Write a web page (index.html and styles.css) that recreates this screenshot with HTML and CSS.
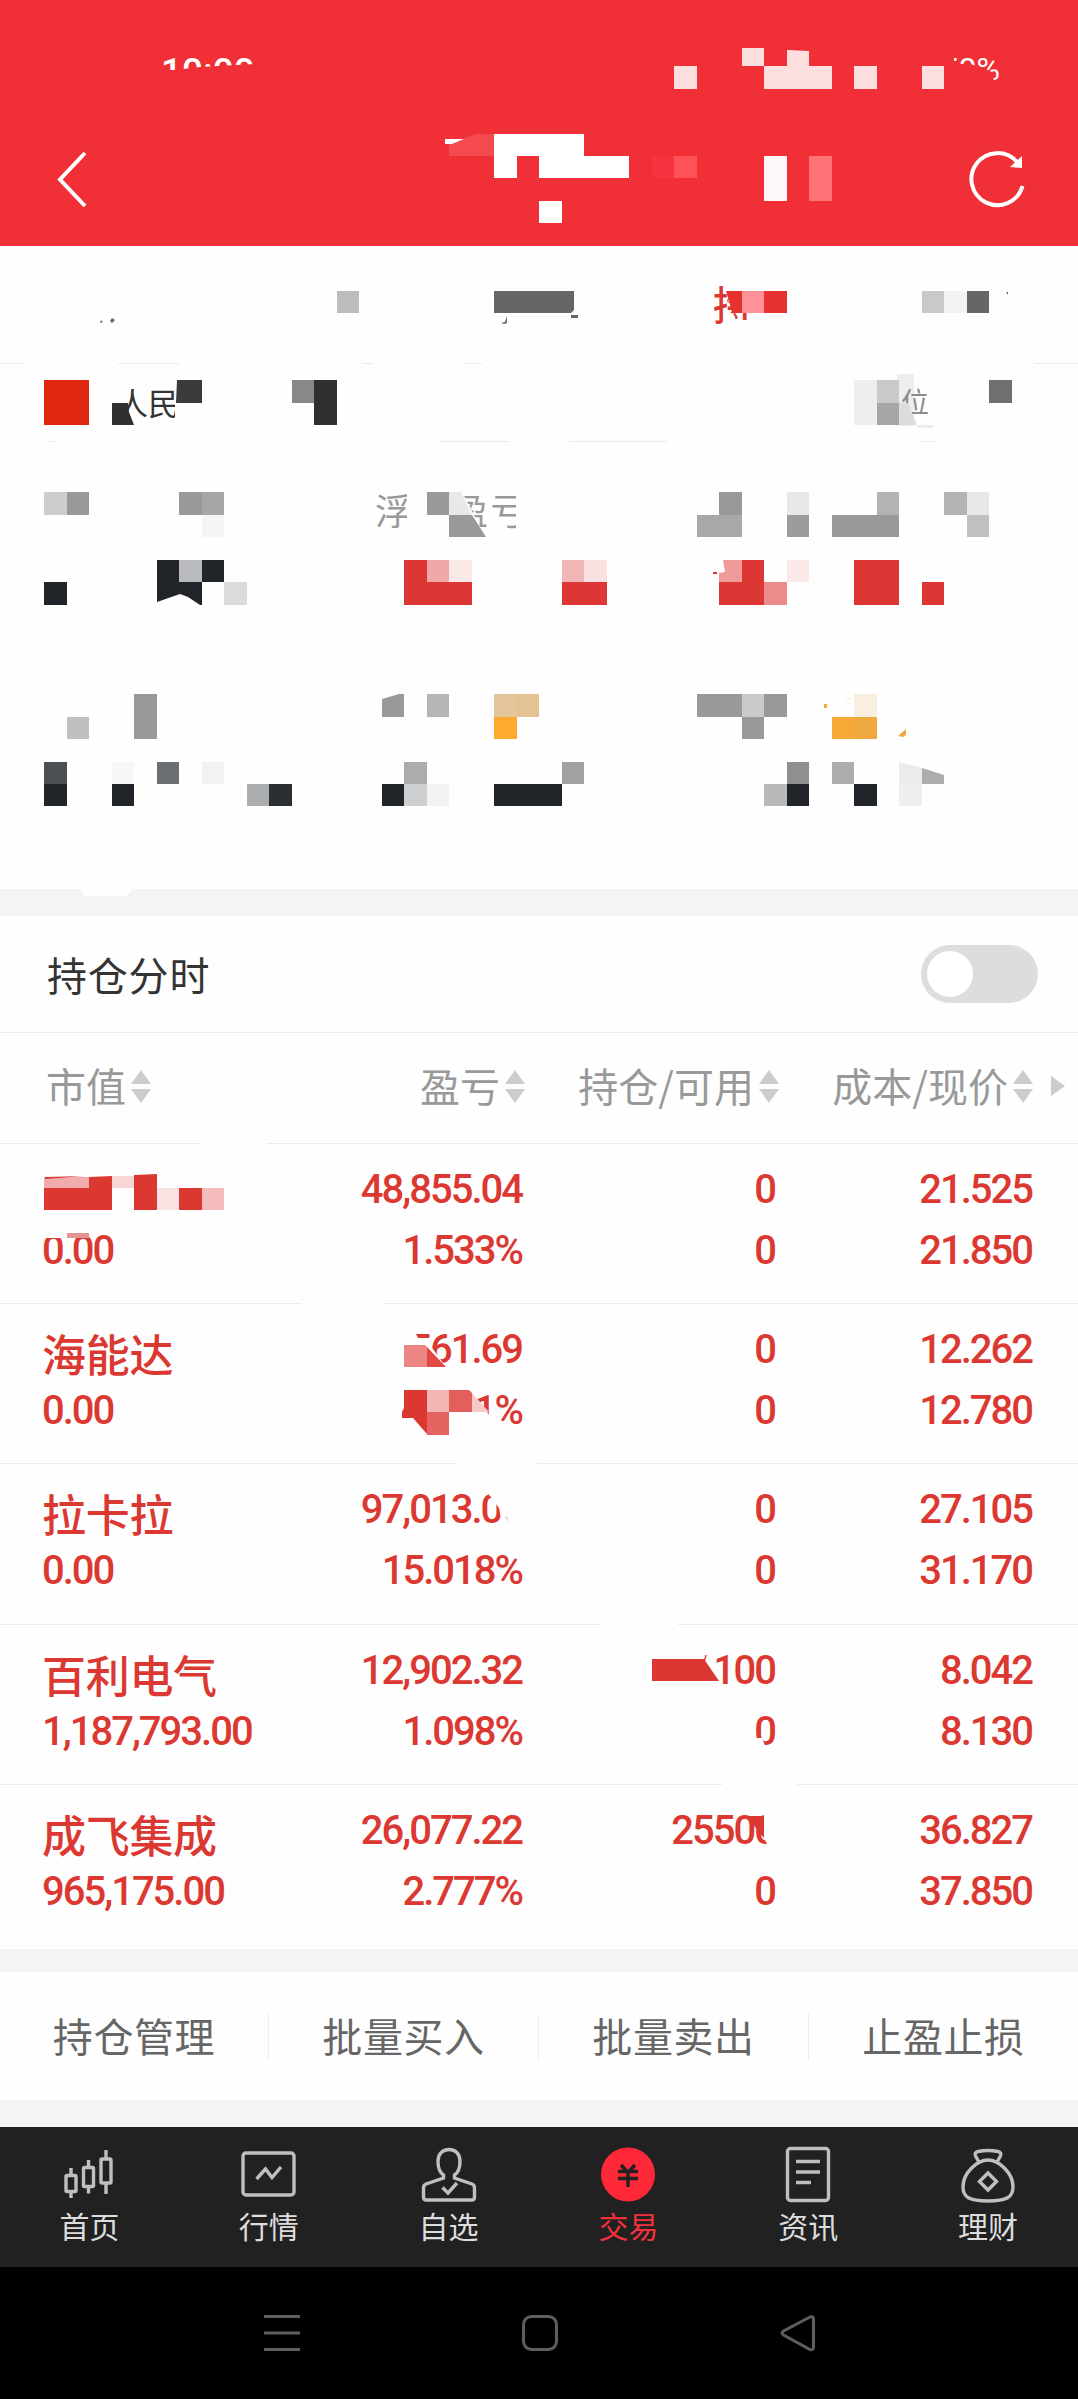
FILE: index.html
```html
<!DOCTYPE html>
<html lang="zh-CN">
<head>
    <meta charset="UTF-8">
    <meta name="viewport" content="width=device-width, initial-scale=1.0">
    <title>持仓</title>
    <link rel="stylesheet" href="styles.css">
</head>

<body>
    <header class="header">
        <div class="status-bar">
            <span class="clock">10:00</span>
            <span class="battery">50%</span>
        </div>
        <div class="title-bar">
            <svg class="back" width="32" height="60" viewBox="0 0 32 60"><path d="M29 3 4 29.500 29 56"/></svg>
            <svg class="refresh" width="60" height="60" viewBox="0 0 60 60">
                <path d="M55.500 36A26 26 0 1 1 50 12"/>
                <path class="head" d="M43 17 55 18V6z"/>
            </svg>
        </div>
        <svg class="mosaic" viewBox="0 0 1078 246">
            <path fill="#f12f37" d="M160 70 175 70 200 67 255 64V92H160zM938 50h16v14h16l14 4 8 4 4 18H938z"/>
            <path fill="#fedfe0" d="M674 66h23v23h-23zM742 48h22v18h-22zM787 50l22 1v15h-22zM764 66h68v23h-68zM854 66h23v23h-23zM922 66h22v23h-22z"/>
            <path fill="#f4494f" d="M449 144 476 134H494V156H449z"/>
            <path fill="#fff" d="M445 139h19l-12 5h-7zM494 134h90v22h45v22h-90v-22h-22v22h-23zM539 201h23v22h-23z"/>
            <path fill="#f73340" d="M652 156h22v22h-22z"/>
            <path fill="#ff5258" d="M674 156h23v22h-23z"/>
            <path fill="#fff8f8" d="M764 156h23v45h-23z"/>
            <path fill="#ff7276" d="M809 156h23v45h-23z"/>
        </svg>
    </header>

    <section class="summary">
        <div class="tabs"><span class="active">持</span></div>
        <div class="account">
            <span class="market">人民</span>
            <span class="unit">位</span>
        </div>
        <div class="metrics"><span>浮动盈亏</span></div>
        <svg class="mosaic" viewBox="0 246 1078 643">
            <!-- gaps -->
            <path fill="#fefefe" d="M25 362h93v3h-93zM179 362h183v3h-183zM373 362h90v3h-90zM482 362h431v3h-431zM915 362h119v3h-119zM0 440h46v3h-46zM55 440h384v3h-384zM509 440h60v3h-60zM668 440h253v3h-253zM935 440h143v3h-143z"/>
            <path fill="#fefefe" d="M726 280h40v11h-40zM731 313h40v20h-33zM728 300l8 20h14v-20zM112 375h14v40h-14zM175 403h30v24h-30zM407 488h42v52h-42zM449 488h11l26 50h-37zM516 488h20v52h-20zM488 518h18v20h-18z"/>
            <!-- tabs -->
            <path fill="#bdbdbd" d="M337 291h22v22h-22z"/>
            <path fill="#666" d="M494 291h80v19l-3 3h-77zM571 315h7v3h-7zM501 323l4-1 2-6v7l-3 1zM967 291h22v22h-22zM1006 292h2v3zM101 320l2 2-3 1zM112 318l3 2-3 3-2-2z"/>
            <path fill="#e53230" d="M726 291h16v22h-10l-3-12zM764 291h23v22h-23z"/>
            <path fill="#ff9298" d="M742 291h22v22h-22z"/>
            <path fill="#c9c9c9" d="M922 291h22v22h-22zM877 380h22v23h-22z"/>
            <path fill="#f3f3f3" d="M944 291h23v22h-23z"/>
            <!-- account -->
            <path fill="#df2710" d="M44 380h45v45h-45z"/>
            <path fill="#303030" d="M112 403h16l1 9 5 13h-22zM314 380h23v45h-23z"/>
            <path fill="#3b3b3b" d="M177 380h25v23h-26z"/>
            <path fill="#888" d="M292 380h22v23h-22z"/>
            <path fill="#eeeef0" d="M854 380h23v45h-23zM917 425h16v3h-16z"/>
            <path fill="#a6a6a6" d="M877 403h22v22h-22zM202 492h22v23h-22z"/>
            <path fill="#ddd" d="M899 403h9l9 22h-18z"/>
            <path fill="#707072" d="M989 380h23v23h-23z"/>
            <!-- first metrics row -->
            <path fill="#cdcdcd" d="M44 492h23v23h-23z"/>
            <path fill="#999" d="M67 492h22v23h-22zM179 492h23v23h-23zM427 492h22v23h-22zM449 515h23l14 22h-37zM719 492h23v23h-23zM832 515h67v22h-67z"/>
            <path fill="#f5f5f5" d="M202 515h22v22h-22z"/>
            <path fill="#e8e8e8" d="M449 492h12l11 23h-23zM787 492h22v23h-22zM967 492h22v23h-22z"/>
            <path fill="#a8a8a8" d="M697 515h45v22h-45z"/>
            <path fill="#9c9c9c" d="M787 515h22v22h-22z"/>
            <path fill="#b3b3b3" d="M877 492h22v23h-22zM944 492h23v23h-23z"/>
            <path fill="#c0c0c0" d="M967 515h22v22h-22z"/>
            <path fill="#212428" d="M44 582h23v23h-23zM157 560h45v45h-2l-12-8-8-3-23 8zM202 560h22v22h-22z"/>
            <path fill="#b8babc" d="M179 560h23v22h-23z"/>
            <path fill="#dadbdd" d="M224 582h23v23h-23z"/>
            <path fill="#dc3734" d="M404 560h23v22h45v23h-68zM562 582h45v23h-45zM742 560h22v45h-45v-23h23zM854 560h45v45h-45zM922 582h22v23h-22zM713 572h4v2h-4z"/>
            <path fill="#efa7a7" d="M427 560h22v22h-22z"/>
            <path fill="#fae9e8" d="M449 560h23v22h-23zM787 560h22v22h-22z"/>
            <path fill="#f2b5b5" d="M562 560h22v22h-22z"/>
            <path fill="#fae1e1" d="M584 560h23v22h-23z"/>
            <path fill="#ee9b99" d="M723 560h19v22h-23v-9l6-1z"/>
            <path fill="#eb8c8a" d="M764 582h23v23h-23z"/>
            <!-- second metrics row -->
            <path fill="#bfbfbf" d="M67 717h22v22h-22z"/>
            <path fill="#999" d="M134 694h23v45h-23zM382 699l17-5h5v23h-22zM697 694h45v23h-45zM764 694h23v23h-23zM742 717h22v22h-22z"/>
            <path fill="#b5b5b5" d="M427 694h22v23h-22z"/>
            <path fill="#cacaca" d="M742 694h22v23h-22z"/>
            <path fill="#e2c69a" d="M494 694h23v23h-23z"/>
            <path fill="#e4c291" d="M517 694h22v23h-22z"/>
            <path fill="#fcab2d" d="M494 717h23v22h-23z"/>
            <path fill="#f8efe0" d="M854 694h23v23h-23z"/>
            <path fill="#f6a934" d="M832 717h22v22h-22z"/>
            <path fill="#f0a83e" d="M854 717h23v22h-23zM824 704h3v4h-3zM898 736l8-7v6l-3 2z"/>
            <path fill="#f8dcae" d="M844 699l6-1v1z"/>
            <path fill="#4c5052" d="M44 762h23v22h-23z"/>
            <path fill="#212428" d="M44 784h23v22h-23zM112 784h22v22h-22zM382 784h22v22h-22zM494 784h68v22h-68zM787 784h22v22h-22zM854 784h23v22h-23z"/>
            <path fill="#f7f7f7" d="M112 762h22v22h-22z"/>
            <path fill="#6a6d71" d="M157 762h22v22h-22z"/>
            <path fill="#f2f2f2" d="M202 762h22v22h-22zM427 784h22v22h-22z"/>
            <path fill="#2b2e33" d="M269 784h23v22h-23z"/>
            <path fill="#abacae" d="M247 784h22v22h-22zM404 762h23v22h-23zM832 762h22v22h-22zM922 768l22 7v9h-22z"/>
            <path fill="#cecfd0" d="M404 784h23v22h-23z"/>
            <path fill="#a0a1a3" d="M562 762h22v22h-22z"/>
            <path fill="#8e8f91" d="M787 762h22v22h-22z"/>
            <path fill="#b8b9bb" d="M764 784h23v22h-23z"/>
            <path fill="#ebebeb" d="M899 762l23 6v16h-23z"/>
            <path fill="#eef0f0" d="M899 784h23v22h-23z"/>
            <path fill="#fefefe" d="M80 889h52l-5 7H85z"/>
        </svg>
    </section>

    <section class="timeshare">
        <span>持仓分时</span>
        <span class="switch"></span>
    </section>

    <section class="holdings">
        <div class="row head">
            <div class="c1">市值<i class="sort"></i></div>
            <div class="c2">盈亏<i class="sort"></i></div>
            <div class="c3">持仓/可用<i class="sort"></i></div>
            <div class="c4">成本/现价<i class="sort"></i></div>
            <i class="more"></i>
        </div>
        <div class="row">
            <div class="c1"><b></b><span>0.00</span></div>
            <div class="c2"><span>48,855.04</span><span>1.533%</span></div>
            <div class="c3"><span>0</span><span>0</span></div>
            <div class="c4"><span>21.525</span><span>21.850</span></div>
        </div>
        <div class="row">
            <div class="c1"><b>海能达</b><span>0.00</span></div>
            <div class="c2"><span>561.69</span><span>4.11%</span></div>
            <div class="c3"><span>0</span><span>0</span></div>
            <div class="c4"><span>12.262</span><span>12.780</span></div>
        </div>
        <div class="row">
            <div class="c1"><b>拉卡拉</b><span>0.00</span></div>
            <div class="c2"><span>97,013.06</span><span>15.018%</span></div>
            <div class="c3"><span>0</span><span>0</span></div>
            <div class="c4"><span>27.105</span><span>31.170</span></div>
        </div>
        <div class="row">
            <div class="c1"><b>百利电气</b><span>1,187,793.00</span></div>
            <div class="c2"><span>12,902.32</span><span>1.098%</span></div>
            <div class="c3"><span>6100</span><span>0</span></div>
            <div class="c4"><span>8.042</span><span>8.130</span></div>
        </div>
        <div class="row">
            <div class="c1"><b>成飞集成</b><span>965,175.00</span></div>
            <div class="c2"><span>26,077.22</span><span>2.777%</span></div>
            <div class="c3"><span>25500</span><span>0</span></div>
            <div class="c4"><span>36.827</span><span>37.850</span></div>
        </div>
        <svg class="mosaic" viewBox="0 1033 1078 916">
            <path fill="#fefefe" d="M200 1142h67v3h-67zM302 1302h81v3h-81zM456 1462h81v3h-81zM601 1623h77v3h-77zM722 1783h75v3h-75z"/>
            <!-- row 1 -->
            <path fill="#fefefe" d="M44 1230h45v8h-45z"/>
            <path fill="#f2abac" d="M44 1177h45v11h-45z"/>
            <path fill="#f9d6d6" d="M112 1176h22v12h-22z"/>
            <path fill="#dc3832" d="M45 1177l39-1-39 3zM89 1177l23-1v34h-68v-22h45zM134 1175l23-1v36h-23zM179 1188h23v22h-23z"/>
            <path fill="#f9e2e2" d="M157 1188h22v22h-22z"/>
            <path fill="#f4bdbc" d="M202 1188h22v22h-22z"/>
            <path fill="#e79391" d="M67 1233h22v5h-22z"/>
            <!-- row 2 -->
            <path fill="#fefefe" d="M404 1330h10l4 8h12v7l16 22h-42zM400 1388h68l22 28v14h-90z"/>
            <path fill="#eb8682" d="M404 1345h21l2 2v20h-23z"/>
            <path fill="#e14844" d="M427 1347l19 20h-19z"/>
            <path fill="#dc3832" d="M404 1390h23v44l-14-16h-11v-6l2-4z"/>
            <path fill="#f3b5b4" d="M427 1390h22v22h-22z"/>
            <path fill="#e45e5c" d="M449 1390h20l3 3v19h-23z"/>
            <path fill="#e56462" d="M427 1412h22v23h-22z"/>
            <path fill="#f8c9c9" d="M472 1393l17 19h-17z"/>
            <!-- row 3 -->
            <path fill="#fefefe" d="M489 1490h41v42h-15l-14-14-2-10-8-11-2-2z"/>
            <path fill="#dc3832" d="M505 1516l5 6-4-4z"/>
            <!-- row 4 -->
            <path fill="#fefefe" d="M690 1650h14v9h-14zM708 1650h8l2 36h-40v-6h12zM757 1738l5 0 4 10h-9z"/>
            <path fill="#dc3832" d="M652 1659h52l15 22h-67zM704 1659l2-4h1l-2 6z"/>
            <!-- row 5 -->
            <path fill="#fefefe" d="M764 1812h14v34h-10l-4-8z"/>
            <path fill="#dc3832" d="M748 1816h16v22l-7-8z"/>
        </svg>
    </section>

    <section class="actions">
        <span>持仓管理</span>
        <span>批量买入</span>
        <span>批量卖出</span>
        <span>止盈止损</span>
    </section>

    <nav class="tabbar">
        <div>
            <svg viewBox="0 0 60 60">
                <rect x="7" y="31.500" width="10" height="16" rx="1"/>
                <rect x="24.500" y="23.500" width="10" height="19" rx="1"/>
                <rect x="42" y="15" width="10" height="24" rx="1"/>
                <path d="M12 24v7.500M12 48v6M29.500 16v7.500M29.500 43v6.500M47 6v9M47 39v11"/>
            </svg>
            首页
        </div>
        <div>
            <svg viewBox="0 0 60 60">
                <rect x="4" y="9" width="51" height="42" rx="3"/>
                <path d="M17.500 35 26.500 25 33 33.500 42 23"/>
            </svg>
            行情
        </div>
        <div>
            <svg viewBox="0 0 60 60">
                <path d="M24.500 31C20 28 19 24 19 17.500 19 10 23.500 5.500 30 5.500S41 10 41 17.500C41 24 40 28 35.500 31V34L53 40Q55.500 41 55.500 44V53Q55.500 56 52.500 56H7.500Q4.500 56 4.500 53V44Q4.500 41 7 40L24.500 34z"/>
                <path d="M23.500 43.500 29 49 38 39"/>
            </svg>
            自选
        </div>
        <div class="on">
            <svg viewBox="0 0 60 60">
                <circle cx="30" cy="30.500" r="27"/>
                <path d="M23 21 30 28.500 37 21M20 27.500H40M20 34.500H40M30 28V43"/>
            </svg>
            交易
        </div>
        <div>
            <svg viewBox="0 0 60 60">
                <rect x="9.500" y="4.500" width="41" height="52" rx="3"/>
                <path d="M18 17.500H42M18 28H42M18 38.500H33"/>
            </svg>
            资讯
        </div>
        <div>
            <svg viewBox="0 0 60 60">
                <path d="M21 18 17.500 12Q16 8.500 20 7.500 30 5.500 40 7.500 44 8.500 42.500 12L39 18"/>
                <path d="M30 16C19 16 5 29 5 43 5 53 11 57 30 57S55 53 55 43C55 29 41 16 30 16z"/>
                <path d="M30 29 38.500 37.500 30 46 21.500 37.500z"/>
            </svg>
            理财
        </div>
    </nav>

    <footer class="sysnav">
        <svg viewBox="0 0 40 40"><path d="M1 3.500H37M1 20H37M1 36.500H37"/></svg>
        <svg viewBox="0 0 40 40"><rect x="1.500" y="3.500" width="33" height="33" rx="8"/></svg>
        <svg viewBox="0 0 40 40"><path d="M30 4 3.500 18Q0.500 20 3.500 22L30 36.500Q33.500 37.500 33.500 34V6Q33.500 3 30 4z"/></svg>
    </footer>
</body>

</html>
```

FILE: styles.css
```css
body {
    margin: 0;
    width: 1078px;
    background-color: #fefefe;
    color: #333;
    font-family: "Noto Sans CJK SC", sans-serif;
    font-size: 40px;
    line-height: 1;
}

.header {
    position: relative;
    height: 246px;
    background-color: #f12f37;
    color: #fff;
    overflow: hidden;
}

/* pixel blocks lying over the content of a section */
.mosaic {
    position: absolute;
    top: 0;
    left: 0;
    width: 100%;
    height: 100%;
    overflow: visible;
}

.status-bar {
    display: flex;
    justify-content: space-between;
    height: 70px;
    padding: 53px 78px 0 161px;
    box-sizing: border-box;
    font-family: Roboto, sans-serif;
}

.clock {
    font-size: 37px;
    font-weight: 500;
}

.battery {
    font-size: 32px;
}

.title-bar {
    display: flex;
    justify-content: space-between;
    align-items: center;
    height: 120px;
    margin-top: 50px;
    margin-bottom: 6px;
    padding: 0 51px 0 56px;
}

.title-bar svg {
    fill: none;
    stroke: #fff;
    stroke-width: 4;
}

.title-bar .head {
    fill: #fff;
    stroke: none;
}

.summary {
    position: relative;
    height: 643px;
}

.tabs {
    display: flex;
    align-items: center;
    height: 113px;
    padding: 0 0 4px 713px;
    border-bottom: 1px solid #ececec;
}

.tabs .active {
    color: #dc3832;
    font-weight: 500;
}

.account {
    display: flex;
    justify-content: space-between;
    align-items: center;
    height: 75px;
    padding: 0 145px 2px 117px;
    border-bottom: 1px solid #ececec;
}

.market {
    font-size: 31px;
}

.unit {
    padding: 13px 4px 11px 4px;
    margin-top: -4px;
    background: linear-gradient(90deg, #eeeef0 17px, transparent 17px);
    color: #8c8c8c;
    font-size: 28px;
}

.metrics {
    padding: 49px 0 0 375px;
    color: #999;
    font-size: 36px;
    letter-spacing: 2.5px;
}

.timeshare {
    display: flex;
    justify-content: space-between;
    align-items: center;
    height: 116px;
    padding: 0 40px 0 47px;
    border-top: 27px solid #f4f4f4;
    border-bottom: 1px solid #ececec;
    letter-spacing: 0.8px;
}

.switch {
    width: 46px;
    height: 46px;
    padding: 6px 65px 6px 6px;
    border-radius: 29px;
    background-color: #ddd;
}

.switch::before {
    content: "";
    display: block;
    width: 46px;
    height: 46px;
    border-radius: 50%;
    background-color: #fff;
}

.holdings {
    position: relative;
    height: 916px;
    border-bottom: 23px solid #f4f4f4;
}

.row {
    display: flex;
    height: 144px;
    padding-top: 15px;
    border-bottom: 1px solid #ececec;
    color: #dc3832;
    font: 500 40px/61px Roboto, sans-serif;
    letter-spacing: -2px;
}

.row:nth-child(4) {
    height: 145px;
}

.row:nth-child(6) {
    border-bottom: none;
}

.row span,
.row b {
    display: block;
    height: 61px;
}

.row b {
    font: 500 44px/68px "Noto Sans CJK SC", sans-serif;
    letter-spacing: -0.3px;
}

.row.head {
    align-items: center;
    height: 110px;
    padding-top: 0;
    color: #999;
    font: 400 40px/1 "Noto Sans CJK SC", sans-serif;
    letter-spacing: 0;
}

.c1 {
    width: 262px;
    padding-left: 42px;
}

.c2 {
    width: 218px;
}

.c3 {
    width: 253px;
}

.c4 {
    width: 257px;
}

.c2,
.c3,
.c4 {
    text-align: right;
}

.head div {
    display: flex;
    justify-content: flex-end;
    align-items: center;
    height: 44px;
    padding-bottom: 6px;
}

.head .c1 {
    justify-content: flex-start;
    width: 260px;
    padding-left: 46px;
}

.head .c2 {
    width: 219px;
}

.head .c3 {
    width: 254px;
}

.head .c4 {
    width: 254px;
}

/* up and down arrows beside a column title */
.sort {
    margin: 2px 0 0 5px;
}

.sort::before,
.sort::after {
    content: "";
    display: block;
    border: 10px solid transparent;
    border-top: none;
    border-bottom: 14px solid #ccc;
}

.sort::after {
    margin-top: 5px;
    border-top: 14px solid #ccc;
    border-bottom: none;
}

.more {
    margin: 0 0 4px 18px;
    border: 10px solid transparent;
    border-left: 14px solid #ccc;
    border-right: none;
}

.actions {
    display: flex;
    align-items: center;
    height: 128px;
    border-bottom: 27px solid #f4f4f4;
    color: #666;
    letter-spacing: 0.6px;
}

.actions span {
    width: 268px;
    height: 47px;
    line-height: 45px;
    text-align: center;
}

.actions span + span {
    width: 269px;
    border-left: 1px solid #eee;
}

.tabbar {
    display: flex;
    height: 140px;
    background-color: #212121;
    color: #ddd;
    font-size: 30px;
}

.tabbar div {
    display: flex;
    flex-direction: column;
    align-items: center;
    width: 180px;
    padding-top: 17px;
}

.tabbar div:first-child {
    width: 179px;
}

.tabbar svg {
    width: 60px;
    height: 60px;
    margin-bottom: 6px;
    fill: none;
    stroke: #bfbfbf;
    stroke-width: 3.4;
}

.tabbar .on {
    color: #f4303c;
}

.tabbar .on svg {
    stroke: #212121;
}

.tabbar circle {
    fill: #ff2839;
    stroke: none;
}

.sysnav {
    display: flex;
    justify-content: space-between;
    align-items: center;
    height: 132px;
    padding: 0 258px 0 263px;
    background-color: #000;
}

.sysnav svg {
    width: 40px;
    height: 40px;
    fill: none;
    stroke: #5e5e5e;
    stroke-width: 3;
}
```
